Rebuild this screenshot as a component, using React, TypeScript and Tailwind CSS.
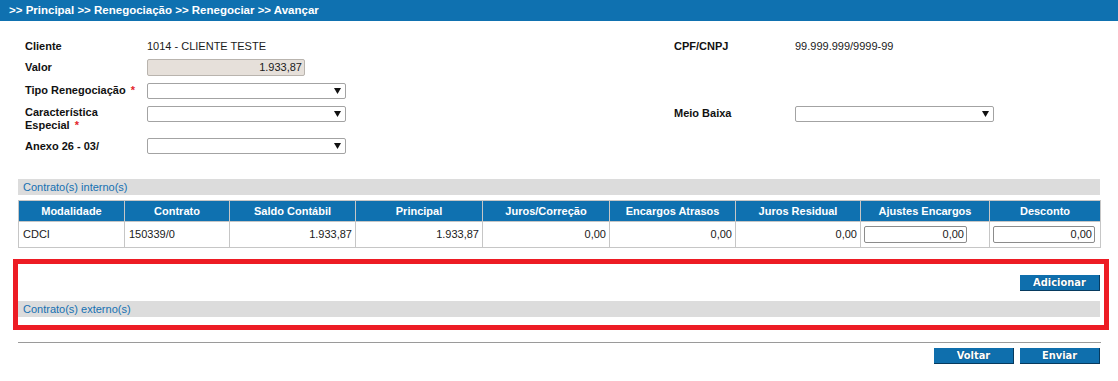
import React from "react";

function FakeSelect({ className = "" }: { className?: string }) {
  return (
    <div
      className={`flex h-[16px] items-center justify-end rounded-[2px] border border-[#a3a3a3] bg-white pr-[4px] ${className}`}
    >
      <svg width="7" height="6" viewBox="0 0 7 6">
        <path d="M0 0h7L3.5 6z" fill="#111" />
      </svg>
    </div>
  );
}

function Req() {
  return <span className="ml-[5px] text-[#e3262b]">*</span>;
}

function Btn({ children }: { children: React.ReactNode }) {
  return (
    <button className="h-[16px] w-[80px] border-b border-r border-[#073a5e] bg-[#0f6fad] font-['DejaVu_Sans_Condensed','DejaVu_Sans',sans-serif] text-[11px] font-bold leading-none text-white [text-shadow:0_0_1px_#04345a]">
      {children}
    </button>
  );
}

const headers = [
  "Modalidade",
  "Contrato",
  "Saldo Contábil",
  "Principal",
  "Juros/Correção",
  "Encargos Atrasos",
  "Juros Residual",
  "Ajustes Encargos",
  "Desconto",
];

const widths = [106, 105, 126, 127, 127, 126, 125, 129, 111];

export default function App() {
  const label = "text-[11px] font-bold text-[#111]";
  const th =
    "h-[21px] border border-[#c6c6c6] bg-[#0f71b0] p-0 text-center text-[11px] font-bold text-white";
  const td = "h-[26px] border border-[#c6c6c6] px-[3px] text-[11px] text-[#1a1a1a]";

  return (
    <div className="min-h-[381px] w-[1118px] bg-white font-['Liberation_Sans',Arial,sans-serif]">
      <div className="flex h-[21px] items-center bg-[#0f71b0] pl-[9px] text-[11.5px] font-bold text-white">
        {">> Principal >> Renegociação >> Renegociar >> Avançar"}
      </div>

      <div className="ml-[18px] w-[1082px]">
        {/* form */}
        <div className="pl-[7px] pt-[17px]">
          <div className="grid h-[16px] grid-cols-[122px_527px_121px_1fr] items-center">
            <span className={label}>Cliente</span>
            <span className="text-[11px] text-[#1a1a1a]">1014 - CLIENTE TESTE</span>
            <span className={label}>CPF/CNPJ</span>
            <span className="text-[11px] text-[#1a1a1a]">99.999.999/9999-99</span>
          </div>
          <div className="mt-[5px] grid h-[17px] grid-cols-[122px_527px_121px_1fr] items-center">
            <span className={label}>Valor</span>
            <div className="flex h-[17px] w-[158px] items-center justify-end rounded-[2px] border border-[#b9b4ae] bg-[#e6e0da] pr-[2px] text-[11px] text-[#1a1a1a]">
              1.933,87
            </div>
          </div>
          <div className="mt-[6px] grid h-[17px] grid-cols-[122px_527px_121px_1fr] items-center">
            <span className={label}>
              Tipo Renegociação
              <Req />
            </span>
            <FakeSelect className="w-[199px]" />
          </div>
          <div className="mt-[6px] grid h-[27px] grid-cols-[122px_527px_121px_1fr] items-start">
            <span className={`${label} pt-[1px] leading-[13px]`}>
              Característica
              <br />
              Especial
              <Req />
            </span>
            <FakeSelect className="mt-[1px] w-[199px]" />
            <span className={`${label} pt-[1px] leading-[14px]`}>Meio Baixa</span>
            <FakeSelect className="mt-[1px] w-[199px]" />
          </div>
          <div className="mt-[6px] grid h-[16px] grid-cols-[122px_527px_121px_1fr] items-center">
            <span className={label}>Anexo 26 - 03/</span>
            <FakeSelect className="w-[199px]" />
          </div>
        </div>

        {/* contratos internos */}
        <div className="mt-[25px] h-[16px] bg-[#dcdcdc] pl-[5px] text-[11px] leading-[16px] text-[#1570b2]">
          Contrato(s) interno(s)
        </div>
        <table className="mt-[5px] w-[1082px] table-fixed border-collapse">
          <colgroup>
            {widths.map((w, i) => (
              <col key={i} style={{ width: w }} />
            ))}
          </colgroup>
          <thead>
            <tr>
              {headers.map((h) => (
                <th key={h} className={th}>
                  {h}
                </th>
              ))}
            </tr>
          </thead>
          <tbody>
            <tr>
              <td className={`${td} pl-[4px]`}>CDCI</td>
              <td className={`${td} pl-[4px]`}>150339/0</td>
              <td className={`${td} text-right`}>1.933,87</td>
              <td className={`${td} text-right`}>1.933,87</td>
              <td className={`${td} text-right`}>0,00</td>
              <td className={`${td} text-right`}>0,00</td>
              <td className={`${td} text-right`}>0,00</td>
              <td className={td}>
                <div className="flex h-[17px] w-[103px] items-center justify-end rounded-[2px] border border-[#8c8c8c] bg-white pr-[2px]">
                  0,00
                </div>
              </td>
              <td className={td}>
                <div className="flex h-[17px] w-[102px] items-center justify-end rounded-[2px] border border-[#8c8c8c] bg-white pr-[2px]">
                  0,00
                </div>
              </td>
            </tr>
          </tbody>
        </table>

        {/* contratos externos */}
        <div className="-ml-[5px] mt-[11px] w-[1096px] border-[5px] border-[#ed1c24] pb-[8px] pl-0 pr-[4px] pt-[11px]">
          <div className="flex justify-end">
            <Btn>Adicionar</Btn>
          </div>
          <div className="mt-[10px] h-[16px] bg-[#dcdcdc] pl-[5px] text-[11px] leading-[16px] text-[#1570b2]">
            Contrato(s) externo(s)
          </div>
        </div>

        <div className="mt-[12px] h-[1px] w-[1083px] bg-[#9a9a9a]" />
        <div className="mt-[5px] flex justify-end gap-[6px]">
          <Btn>Voltar</Btn>
          <Btn>Enviar</Btn>
        </div>
      </div>
    </div>
  );
}
